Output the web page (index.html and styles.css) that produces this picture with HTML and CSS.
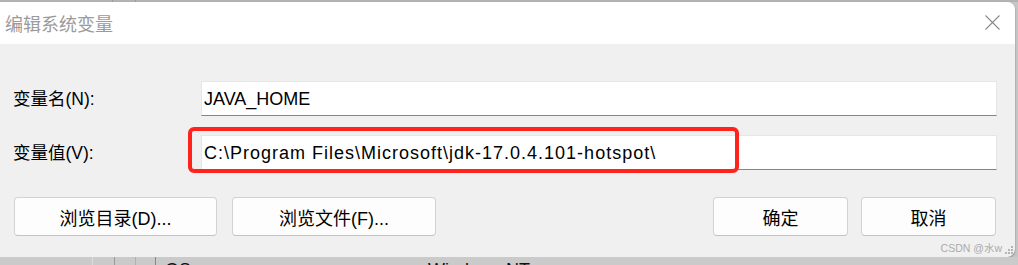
FILE: index.html
```html
<!DOCTYPE html>
<html lang="zh-CN">
<head>
    <meta charset="UTF-8">
    <meta name="viewport" content="width=device-width, initial-scale=1.0">
    <title>编辑系统变量</title>
    <link rel="stylesheet" href="styles.css">
</head>
<body>
    <div class="backdrop-top">
        <span class="bg-line l1"></span>
        <span class="bg-line l2"></span>
    </div>

    <div class="dialog">
        <div class="titlebar">
            <span class="title">编辑系统变量</span>
            <svg class="close" width="15" height="15" viewBox="0 0 15 15">
                <path d="M0.5 0.5 L14.5 14.5 M14.5 0.5 L0.5 14.5" stroke="#8a8a8a" stroke-width="1.1" fill="none"/>
            </svg>
        </div>

        <div class="content">
            <div class="form">
                <label class="label">变量名(N):</label>
                <div class="field">
                    <input class="text-input" type="text" value="JAVA_HOME">
                </div>

                <label class="label">变量值(V):</label>
                <div class="field">
                    <input class="text-input path-input" type="text" value="C:\Program Files\Microsoft\jdk-17.0.4.101-hotspot\">
                    <!-- 标注框 -->
                    <span class="mark-box"></span>
                </div>
            </div>

            <div class="buttons">
                <div class="group">
                    <button class="btn btn-wide">浏览目录(D)...</button>
                    <button class="btn btn-wide">浏览文件(F)...</button>
                </div>
                <div class="group group-right">
                    <button class="btn btn-small">确定</button>
                    <button class="btn btn-small">取消</button>
                </div>
            </div>
        </div>

        <div class="watermark">CSDN @水w</div>
        <div class="grip">
            <i></i><i></i><i></i><i></i><i></i><i></i>
        </div>
    </div>

    <div class="backdrop-bottom">
        <span class="bg-line b1"></span>
        <span class="bg-line b2"></span>
        <span class="bg-line b3"></span>
        <span class="bg-line b4"></span>
        <span class="peek-text os">OS</span>
        <span class="peek-text nt">Windows NT</span>
    </div>
</body>
</html>
```

FILE: styles.css
```css
body {
    margin: 0;
    width: 1018px;
    height: 265px;
    overflow: hidden;
    background-color: #c6c6c6;
    font-family: "Liberation Sans", "Noto Sans CJK SC", sans-serif;
    font-size: 18px;
    color: #000;
}

/* janela de fundo */
.backdrop-top {
    position: relative;
    height: 2px;
    background-color: #b3b3b3;
}
.backdrop-bottom {
    position: relative;
    height: 8px;
    overflow: hidden;
    background-color: #cacaca;
}
.bg-line {
    position: absolute;
    top: 0;
    bottom: 0;
    width: 1px;
    background-color: #9a9a9a;
}
.l1 { left: 112px; }
.l2 { left: 135px; }
.b1 { left: 92px; background-color: #dcdcdc; }
.b2 { left: 114px; }
.b3 { left: 135px; background-color: #b0b0b0; }
.b4 { left: 155px; background-color: #888; }
.peek-text {
    position: absolute;
    top: 3px;
    font-size: 18px;
    line-height: 20px;
    color: #111;
}
.os { left: 165px; }
.nt { left: 428px; }

/* diálogo */
.dialog {
    position: relative;
    width: 1015px;
    height: 255px;
    background-color: #f0f0f0;
    border-radius: 0 8px 8px 0;
    box-shadow: 0 1px 2px rgba(0,0,0,0.35);
    overflow: hidden;
}
.titlebar {
    position: relative;
    height: 42px;
    background-color: #fff;
    display: flex;
    align-items: center;
    padding-left: 5px;
}
.title {
    font-family: "Noto Sans CJK SC", sans-serif;
    color: #9a9a9a;
    font-size: 18px;
    line-height: 20px;
}
.close {
    position: absolute;
    top: 13px;
    right: 15px;
}

.content {
    padding: 37px 18px 0 13px;
}
.form {
    display: grid;
    grid-template-columns: 188px 1fr;
    grid-auto-rows: 35px;
    row-gap: 19px;
    align-items: center;
}
.label {
    font-family: "Liberation Sans", "Noto Sans CJK SC", sans-serif;
    font-size: 17.5px;
    line-height: 20px;
}
.field {
    position: relative;
    height: 35px;
}
.text-input {
    width: 100%;
    height: 35px;
    box-sizing: border-box;
    margin: 0;
    padding: 1px 2px 0 2px;
    border: 1px solid #e6e6e6;
    border-bottom: 1px solid #858585;
    background-color: #fff;
    font-family: "Liberation Sans", sans-serif;
    font-size: 18px;
    color: #000;
    outline: none;
}
.path-input {
    letter-spacing: 1px;
}
.mark-box {
    position: absolute;
    left: -13px;
    top: -8px;
    width: 551px;
    height: 46px;
    box-sizing: border-box;
    border: 4px solid #ff231c;
    border-radius: 6px;
}

.buttons {
    display: flex;
    justify-content: space-between;
    margin-top: 27px;
    padding: 0 1px;
}
.group {
    display: flex;
    gap: 15px;
}
.group-right {
    gap: 13px;
}
.btn {
    height: 39px;
    padding: 0;
    background-color: #fdfdfd;
    border: 1px solid #d2d2d2;
    border-bottom-color: #c2c2c2;
    border-radius: 4px;
    font-family: "Liberation Sans", "Noto Sans CJK SC", sans-serif;
    font-size: 18px;
    color: #000;
    cursor: pointer;
}
.btn-wide {
    width: 203px;
}
.btn-wide + .btn-wide {
    width: 204px;
}
.btn-small {
    width: 135px;
}

.watermark {
    position: absolute;
    right: 13px;
    bottom: 3px;
    font-family: "Liberation Sans", "Noto Sans CJK SC", sans-serif;
    font-size: 10.5px;
    line-height: 12px;
    color: #ababab;
}
.grip {
    position: absolute;
    right: 2px;
    bottom: 2px;
    width: 9px;
    height: 9px;
}
.grip i {
    position: absolute;
    width: 2px;
    height: 2px;
    background-color: #b5b5b5;
}
.grip i:nth-child(1) { right: 0; top: 0; }
.grip i:nth-child(2) { right: 0; top: 3px; }
.grip i:nth-child(3) { right: 3px; top: 3px; }
.grip i:nth-child(4) { right: 0; top: 6px; }
.grip i:nth-child(5) { right: 3px; top: 6px; }
.grip i:nth-child(6) { right: 6px; top: 6px; }
```
